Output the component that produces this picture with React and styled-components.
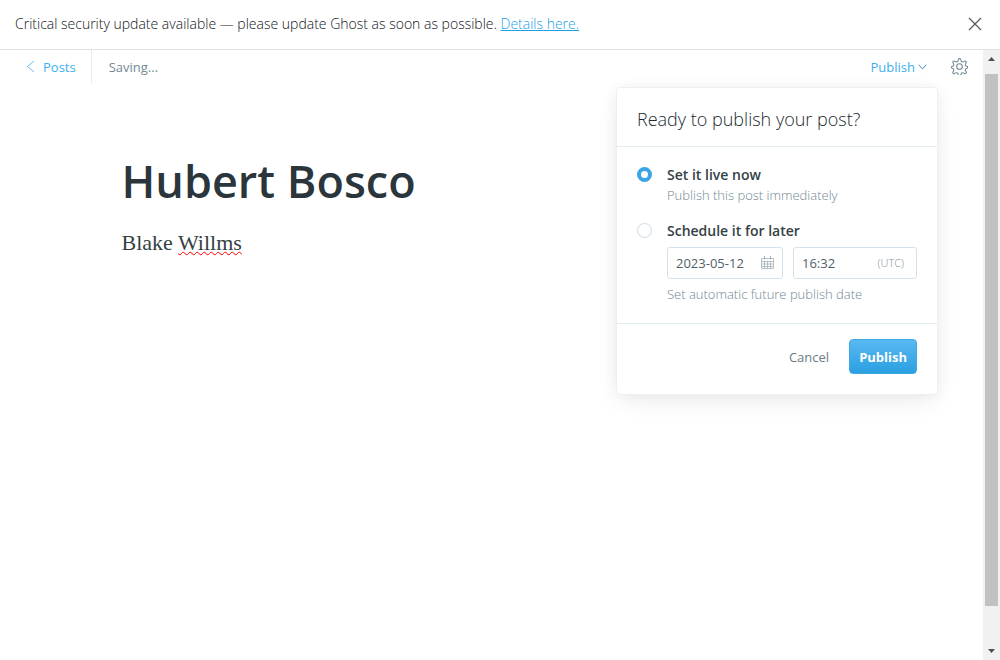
import React, { useState } from "react";
import styled, { createGlobalStyle } from "styled-components";

const GlobalStyle = createGlobalStyle`
  *, *::before, *::after { box-sizing: border-box; }
  body {
    margin: 0;
    background: #fff;
    color: #343f44;
    font-family: "Segoe UI", "Open Sans", "Noto Sans", sans-serif;
    font-size: 13px;
    line-height: 20px;
  }
  button, input {
    margin: 0;
    padding: 0;
    border: 0;
    background: none;
    color: inherit;
    font: inherit;
  }
  button { cursor: pointer; }
`;

const Page = styled.div`
  display: flex;
  flex-direction: column;
  min-height: 100vh;
`;

const Banner = styled.aside`
  display: flex;
  align-items: center;
  justify-content: space-between;
  padding: 14px 18px 15px 15px;
  border-bottom: 1px solid #dfe1e3;
  color: #0f1518;
  font-size: 14px;
  font-weight: 300;
`;

const BannerText = styled.p`
  margin: 0;
`;

const BannerLink = styled.a`
  color: #1e9fe8;
  text-decoration: underline;
`;

const IconButton = styled.button`
  display: flex;
  color: ${(p) => p.$color};
`;

const Workspace = styled.div`
  display: flex;
  flex: 1;
`;

const Editor = styled.main`
  flex: 1;
  min-width: 0;
`;

const Toolbar = styled.header`
  display: flex;
  align-items: flex-start;
  justify-content: space-between;
  padding: 0 15px 0 26px;
`;

const ToolbarGroup = styled.div`
  display: flex;
  align-items: center;
  height: 33px;
  gap: ${(p) => p.$gap || "0"};
`;

const BackLink = styled.a`
  display: flex;
  align-items: center;
  align-self: stretch;
  gap: 7px;
  padding-right: 15px;
  border-right: 1px solid #e3edf2;
  color: #3eb0ef;
  text-decoration: none;
`;

const Status = styled.span`
  padding-left: 17px;
  color: #738a94;
`;

const PublishMenu = styled.div`
  position: relative;
`;

const MenuTrigger = styled.button`
  display: flex;
  align-items: center;
  gap: 3px;
  color: #3eb0ef;
`;

const Document = styled.article`
  display: flex;
  flex-direction: column;
  gap: 15px;
  width: 100%;
  max-width: 740px;
  margin: 66px auto 0;
`;

const TitleInput = styled.input`
  width: 100%;
  outline: none;
  color: #2b363c;
  font-size: 45px;
  font-weight: 600;
  line-height: 64px;
`;

const Body = styled.p`
  margin: 0;
  outline: none;
  font-family: "Liberation Serif", serif;
  font-size: 22px;
  line-height: 30px;
`;

const Misspelled = styled.span`
  text-decoration: underline wavy #f00 1px;
  text-decoration-skip-ink: none;
`;

const Popover = styled.form`
  position: absolute;
  top: 30px;
  right: -11px;
  width: 322px;
  border: 1px solid #edf0f2;
  border-radius: 4px;
  background: #fff;
  box-shadow: 0 8px 22px -4px rgba(40, 50, 60, 0.1), 0 0 14px rgba(40, 50, 60, 0.04);
`;

const PopoverTitle = styled.h2`
  margin: 0;
  padding: 19px 20px 15px;
  border-bottom: 1px solid #e3edf4;
  color: #20292e;
  font-size: 18px;
  font-weight: 300;
  line-height: 24px;
`;

const Options = styled.div`
  display: flex;
  flex-direction: column;
  gap: 16px;
  padding: 18px 20px 19px;
`;

const Option = styled.div`
  display: grid;
  grid-template-columns: 15px minmax(0, 1fr);
  column-gap: 15px;
`;

const Radio = styled.input`
  appearance: none;
  width: 15px;
  height: 15px;
  margin-top: 2px;
  border: 1px solid #c9dcea;
  border-radius: 50%;
  background: #fff;

  &:checked {
    border: 4px solid #3ba5e6;
  }
`;

const OptionLabel = styled.label`
  font-size: 14px;
  font-weight: 600;
`;

const OptionHint = styled.p`
  grid-column: 2;
  margin: 0;
  color: #6f8793;
  font-weight: 300;
`;

const Fields = styled.div`
  grid-column: 2;
  display: grid;
  grid-template-columns: 116px minmax(0, 1fr);
  gap: 10px;
  padding: 6px 0 5px;
`;

const Field = styled.span`
  display: flex;
  align-items: center;
  height: 32px;
  padding: 0 ${(p) => p.$end} 0 8px;
  border: 1px solid #d3e2eb;
  border-radius: 3px;
  color: #a3b2ba;
`;

const FieldInput = styled.input`
  flex: 1;
  min-width: 0;
  outline: none;
  color: #4f5f67;
`;

const Zone = styled.span`
  color: #7f929c;
  font-size: 11px;
  font-weight: 300;
`;

const Footer = styled.footer`
  display: flex;
  align-items: center;
  justify-content: flex-end;
  gap: 20px;
  padding: 15px 20px 20px;
  border-top: 1px solid #e3edf4;
`;

const CancelButton = styled.button`
  padding-top: 2px;
  color: #6b7c85;
`;

const SubmitButton = styled.button`
  height: 35px;
  padding: 2px 9px 0;
  border: 1px solid #3fa8e4;
  border-radius: 4px;
  background: linear-gradient(#58b9f0, #2b9fe2);
  color: #fff;
  font-weight: 700;
`;

const Scrollbar = styled.div`
  display: flex;
  flex-direction: column;
  align-items: center;
  gap: 13px;
  width: 17px;
  padding: 7px 0;
  background: #f1f1f1;
`;

const ScrollTrack = styled.div`
  flex: 1;
  display: flex;
  flex-direction: column;
  width: 13px;
  padding-bottom: 30px;
`;

const ScrollThumb = styled.div`
  flex: 1;
  background: #c1c1c1;
`;

const ScrollArrow = styled.svg`
  display: block;
  fill: #505050;
`;

const CloseIcon = () => (
  <svg width="14" height="14" viewBox="0 0 14 14" fill="none" stroke="currentColor" strokeWidth="1.2" aria-hidden="true">
    <path d="M1 1l12 12M13 1L1 13" />
  </svg>
);

const BackIcon = () => (
  <svg width="10" height="14" viewBox="0 0 10 14" fill="none" stroke="currentColor" strokeWidth="0.8" aria-hidden="true">
    <path d="M8 1L1.5 6.5L8 12" />
  </svg>
);

const ChevronIcon = () => (
  <svg width="9" height="6" viewBox="0 0 9 6" fill="none" stroke="#4a8fbd" aria-hidden="true">
    <path d="M0.7 0.7l3.8 4.3l3.8 -4.3" />
  </svg>
);

const GearIcon = () => (
  <svg width="17" height="17" viewBox="0 0 24 24" fill="none" stroke="currentColor" strokeWidth="1.5" strokeLinejoin="round" aria-hidden="true">
    <circle cx="12" cy="12" r="4" />
    <path d="M13.7 2l.7 2.2a2.2 2.2 0 0 0 3 1.2l2-1a1.6 1.6 0 0 1 2.1 2.1l-1 2a2.2 2.2 0 0 0 1.2 3l.9.3a1.500 1.500 0 0 1 0 2.800l-.9.3a2.200 2.200 0 0 0-1.200 3l1 2a1.600 1.600 0 0 1-2.100 2.100l-2-1a2.200 2.200 0 0 0-3 1.200l-.7 1.800a1.700 1.700 0 0 1-3.200 0l-.7-1.800a2.200 2.200 0 0 0-3-1.200l-2 1a1.600 1.600 0 0 1-2.100-2.100l1-2a2.200 2.200 0 0 0-1.200-3l-.9-.3a1.500 1.500 0 0 1 0-2.800l.9-.3a2.200 2.200 0 0 0 1.200-3l-1-2a1.600 1.600 0 0 1 2.100-2.100l2 1a2.200 2.200 0 0 0 3-1.200l.7-2.200a1.700 1.700 0 0 1 3.200 0z" />
  </svg>
);

const CalendarIcon = () => (
  <svg width="13" height="13" viewBox="0 0 13 13" fill="none" stroke="currentColor" aria-hidden="true">
    <path d="M0.5 2.5h12v10h-12zM0.5 5.5h12M0.5 8h12M0.5 10.5h12M3.5 5v7.5M6.5 5v7.5M9.5 5v7.5" strokeWidth="0.8" />
    <path d="M3.5 0v3.5M9.5 0v3.5" />
  </svg>
);

export default function App() {
  const [mode, setMode] = useState("now");
  return (
    <Page>
      <GlobalStyle />
      <Banner>
        <BannerText>
          Critical security update available — please update Ghost as soon as possible.{" "}
          <BannerLink href="#details">Details here.</BannerLink>
        </BannerText>
        <IconButton type="button" aria-label="Close" $color="#50585d">
          <CloseIcon />
        </IconButton>
      </Banner>
      <Workspace>
        <Editor>
          <Toolbar>
            <ToolbarGroup>
              <BackLink href="#posts">
                <BackIcon />
                Posts
              </BackLink>
              <Status>Saving...</Status>
            </ToolbarGroup>
            <ToolbarGroup $gap="24px">
              <PublishMenu>
                <MenuTrigger type="button" aria-expanded="true">
                  Publish
                  <ChevronIcon />
                </MenuTrigger>
                <Popover onSubmit={(e) => e.preventDefault()}>
                  <PopoverTitle>Ready to publish your post?</PopoverTitle>
                  <Options>
                    <Option>
                      <Radio type="radio" name="mode" id="now" checked={mode === "now"} onChange={() => setMode("now")} />
                      <OptionLabel htmlFor="now">Set it live now</OptionLabel>
                      <OptionHint>Publish this post immediately</OptionHint>
                    </Option>
                    <Option>
                      <Radio type="radio" name="mode" id="later" checked={mode === "later"} onChange={() => setMode("later")} />
                      <OptionLabel htmlFor="later">Schedule it for later</OptionLabel>
                      <Fields>
                        <Field $end="8px">
                          <FieldInput aria-label="Date" defaultValue="2023-05-12" />
                          <CalendarIcon />
                        </Field>
                        <Field $end="12px">
                          <FieldInput aria-label="Time" defaultValue="16:32" />
                          <Zone>(UTC)</Zone>
                        </Field>
                      </Fields>
                      <OptionHint>Set automatic future publish date</OptionHint>
                    </Option>
                  </Options>
                  <Footer>
                    <CancelButton type="button">Cancel</CancelButton>
                    <SubmitButton type="submit">Publish</SubmitButton>
                  </Footer>
                </Popover>
              </PublishMenu>
              <IconButton type="button" aria-label="Settings" $color="#738a94">
                <GearIcon />
              </IconButton>
            </ToolbarGroup>
          </Toolbar>
          <Document>
            <TitleInput aria-label="Post title" defaultValue="Hubert Bosco" />
            <Body contentEditable suppressContentEditableWarning spellCheck={false}>
              Blake <Misspelled>Willms</Misspelled>
            </Body>
          </Document>
        </Editor>
        <Scrollbar aria-hidden="true">
          <ScrollArrow width="7" height="4" viewBox="0 0 7 4">
            <path d="M0 4L3.5 0L7 4z" />
          </ScrollArrow>
          <ScrollTrack>
            <ScrollThumb />
          </ScrollTrack>
          <ScrollArrow width="7" height="4" viewBox="0 0 7 4">
            <path d="M0 0L3.5 4L7 0z" />
          </ScrollArrow>
        </Scrollbar>
      </Workspace>
    </Page>
  );
}
